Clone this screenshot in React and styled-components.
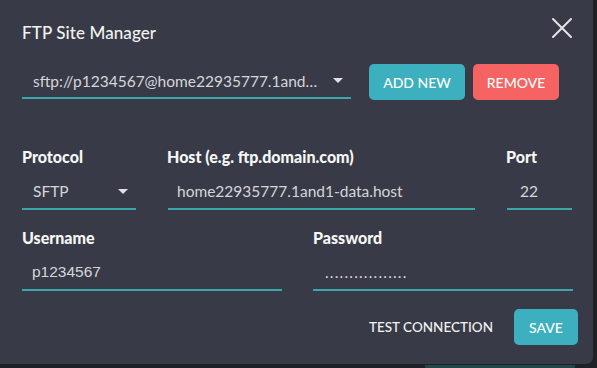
import React from 'react'
import styled, { createGlobalStyle } from 'styled-components'

const Global = createGlobalStyle`
  body {
    margin: 0;
    background: #1f2126;
    font-family: Lato, "Open Sans", sans-serif;
  }
`

const Dialog = styled.div`
  position: relative;
  width: 593px;
  height: 364px;
  box-sizing: border-box;
  background: #383b47;
  border-radius: 0 0 7px 0;
  padding: 22px 20px 0 22px;
  color: #f2f2f2;
`

const BackBar = styled.div`
  position: absolute;
  left: 425px;
  top: 365px;
  width: 150px;
  height: 6px;
  background: #23474d;
`

const Header = styled.div`
  display: flex;
  align-items: center;
  justify-content: space-between;
  height: 20px;
`

const Title = styled.div`
  font-size: 17px;
  font-weight: 500;
  letter-spacing: 0.1px;
`

const Close = styled.button`
  background: none;
  border: 0;
  padding: 0;
  width: 22px;
  height: 22px;
  margin-top: -8px;
  margin-right: 0;
  cursor: pointer;
  display: flex;
`

const SiteRow = styled.div`
  display: flex;
  align-items: flex-start;
  gap: 8px;
  margin-top: 22px;
  height: 36px;
`

const Select = styled.div`
  display: flex;
  align-items: center;
  justify-content: space-between;
  width: ${(p) => p.$w}px;
  height: ${(p) => p.$h || 35}px;
  box-sizing: border-box;
  padding: 0 8px 0 11px;
  margin-right: ${(p) => p.$mr || 0}px;
  border-bottom: 2px solid #3aa6a8;
  font-size: 15.5px;
  color: #d6d6da;
`

const SelectText = styled.span`
  white-space: nowrap;
  overflow: hidden;
  text-overflow: ellipsis;
  margin-right: 12px;
`

const Caret = styled.span`
  flex-shrink: 0;
  width: 0;
  height: 0;
  border-left: 5px solid transparent;
  border-right: 5px solid transparent;
  border-top: 5px solid #e0e0e4;
`

const Button = styled.button`
  height: 36px;
  width: ${(p) => p.$w}px;
  border: 0;
  border-radius: 5px;
  background: ${(p) => p.$bg};
  color: #fff;
  font-family: Lato, "Open Sans", sans-serif;
  font-size: 14px;
  font-weight: 500;
  text-transform: uppercase;
  padding: 0;
  cursor: pointer;
`

const TextButton = styled.button`
  background: none;
  border: 0;
  padding: 0;
  height: 36px;
  color: #f2f2f2;
  font-family: Lato, "Open Sans", sans-serif;
  font-size: 13.5px;
  font-weight: 500;
  text-transform: uppercase;
`

const Grid = styled.div`
  display: grid;
  grid-template-columns: ${(p) => p.$cols};
  column-gap: ${(p) => p.$gap}px;
  row-gap: 7px;
  margin-top: ${(p) => p.$mt}px;
`

const Label = styled.label`
  font-size: 16px;
  font-weight: 900;
  line-height: 20px;
  height: 20px;
  color: #f6f6f6;
  margin-left: ${(p) => p.$ml || 0}px;
`

const Input = styled.input`
  height: 36px;
  box-sizing: border-box;
  width: 100%;
  background: transparent;
  border: 0;
  border-bottom: 2px solid #3aa6a8;
  padding: 0 0 1px ${(p) => p.$pl || 10}px;
  font-family: ${(p) => (p.$arial ? '"Liberation Sans", Arial, sans-serif' : 'Lato, "Open Sans", sans-serif')};
  font-size: 15.5px;
  color: #d6d6da;
  outline: none;
  letter-spacing: ${(p) => p.$ls || 0}px;
`

const Footer = styled.div`
  display: flex;
  justify-content: flex-end;
  align-items: center;
  gap: 21px;
  margin-top: 18px;
  margin-right: -5px;
`

export default function App() {
  return (
    <>
      <Global />
      <Dialog>
        <Header>
          <Title>FTP Site Manager</Title>
          <Close aria-label="close">
            <svg width="22" height="22" viewBox="0 0 22 22">
              <path d="M2 2 L20 20 M20 2 L2 20" stroke="#e4e4e8" strokeWidth="2" strokeLinecap="round" />
            </svg>
          </Close>
        </Header>

        <SiteRow>
          <Select $w={329} $mr={10}>
            <SelectText>sftp://p1234567@home22935777.1and1-data.host</SelectText>
            <Caret />
          </Select>
          <Button $w={96} $bg="#3db0bf">Add New</Button>
          <Button $w={86} $bg="#f66363">Remove</Button>
        </SiteRow>

        <Grid $cols="114px 307px 65px" $gap={32} $mt={47}>
          <Label>Protocol</Label>
          <Label $ml={-1}>Host (e.g. ftp.domain.com)</Label>
          <Label $ml={-1}>Port</Label>
          <Select $w={114} $h={36}>
            <SelectText>SFTP</SelectText>
            <Caret />
          </Select>
          <Input readOnly value="home22935777.1and1-data.host" $pl={9} />
          <Input readOnly value="22" $pl={13} />
        </Grid>

        <Grid $cols="260px 260px" $gap={31} $mt={18}>
          <Label>Username</Label>
          <Label>Password</Label>
          <Input readOnly value="p1234567" $arial />
          <Input readOnly value="................." $pl={12} $ls={1.2} />
        </Grid>

        <Footer>
          <TextButton>Test Connection</TextButton>
          <Button $w={64} $bg="#3db0bf">Save</Button>
        </Footer>
      </Dialog>
      <BackBar />
    </>
  )
}
